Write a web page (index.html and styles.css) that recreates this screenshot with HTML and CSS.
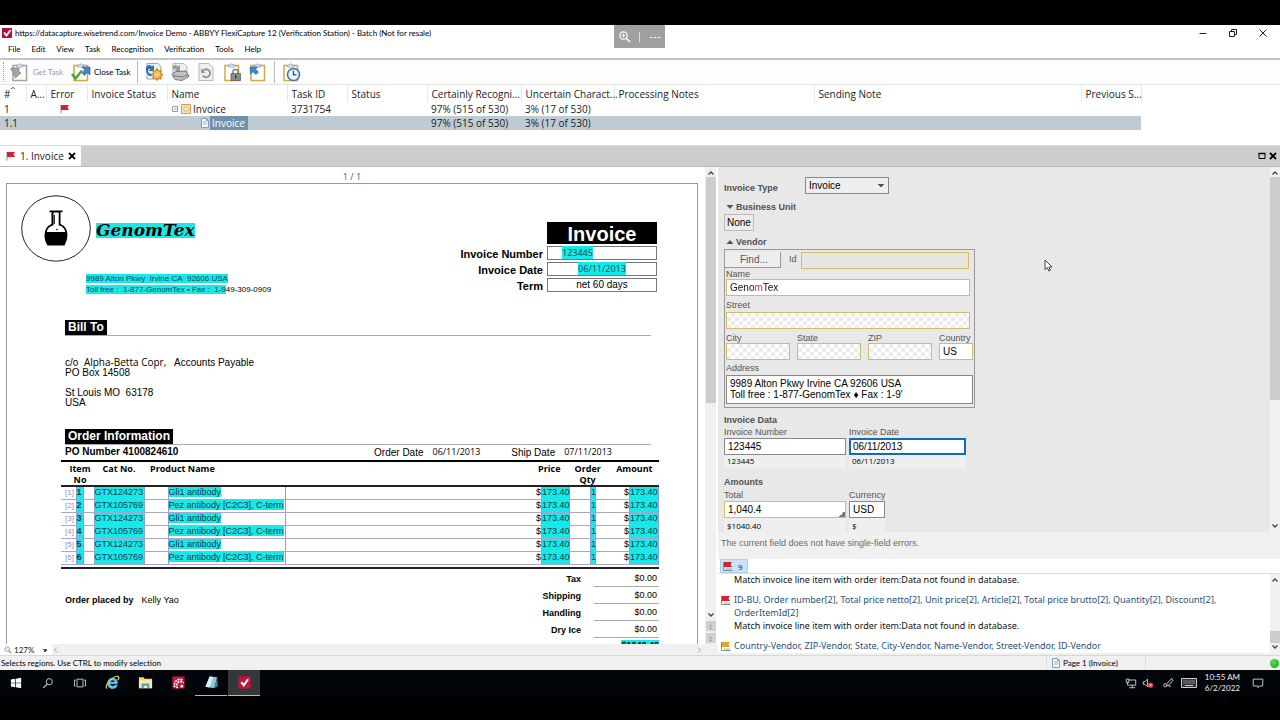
FILE: index.html
```html
<!DOCTYPE html>
<html lang="en">
<head>
<meta charset="utf-8">
<title>ABBYY FlexiCapture 12 (Verification Station)</title>
<link rel="stylesheet" href="styles.css">
</head>
<body>
<svg class="defs" aria-hidden="true">
  <symbol id="flag" viewBox="0 0 10 10"><path d="M1 1V9.5" stroke="#8a8a8a" stroke-width="1"/><path d="M1 1H9L7.5 3.5 9 6H1z" fill="currentColor"/></symbol>
  <symbol id="flagdoc" viewBox="0 0 10 10"><path d="M.5 1V9.500H9.500" stroke="#8a8a8a" fill="none"/><path d="M3 8H9" stroke="#aab"/><path d="M1 1H9L7.500 3.500 9 6H1z" fill="currentColor"/></symbol>
  <symbol id="page" viewBox="0 0 10 10"><path d="M1.500.500H6.500L8.500 2.500V9.500H1.500z" fill="#eef4fb" stroke="#8c9db0"/><path d="M3 4H7M3 6H7" stroke="#a9b9cc"/><path d="M6.500.500V2.500H8.500" fill="none" stroke="#8c9db0"/></symbol>
  <symbol id="clip" viewBox="0 0 20 20"><path d="M3 3.500H16.500V18.500H3z" fill="#fff" stroke="currentColor" stroke-width="1.500"/><path d="M6.500 5V3H8.500Q9.700 0 11 3H13V5z" fill="#dbe9f5" stroke="#8ba3b8" stroke-width=".8"/></symbol>
  <symbol id="up" viewBox="0 0 8 8"><path d="M1.500 5.500 4 3 6.500 5.500" fill="none" stroke="#444" stroke-width="1.300"/></symbol>
  <symbol id="down" viewBox="0 0 8 8"><path d="M1.500 2.500 4 5 6.500 2.500" fill="none" stroke="#444" stroke-width="1.300"/></symbol>
</svg>

<div class="app">
  <header class="titlebar">
    <svg class="i10" viewBox="0 0 10 10"><path d="M0 0H10V10H0z" fill="#b3103c"/><path d="M2 4.500 4.500 7.500 8.500 2" fill="none" stroke="#fff" stroke-width="1.800"/></svg>
    <h1>https://datacapture.wisetrend.com/Invoice Demo - ABBYY FlexiCapture 12 (Verification Station) - Batch (Not for resale)</h1>
    <div class="winbtns">
      <button aria-label="Minimize"><svg viewBox="0 0 10 10"><path d="M1.500 5.500H8.500" stroke="#222"/></svg></button>
      <button aria-label="Restore"><svg viewBox="0 0 10 10"><path d="M1.500 3.500H6.500V8.500H1.500zM3.500 3.500V1.500H8.500V6.500H6.500" fill="none" stroke="#222"/></svg></button>
      <button aria-label="Close"><svg viewBox="0 0 10 10"><path d="M1.500 1.500 8.500 8.500M8.500 1.500 1.500 8.500" stroke="#222"/></svg></button>
    </div>
  </header>
  <div class="overlay">
    <button aria-label="Zoom in"><svg viewBox="0 0 14 14"><circle cx="5.500" cy="5.500" r="3.700" fill="none" stroke="#fff" stroke-width="1.200"/><path d="M8.300 8.300 12 12" stroke="#fff" stroke-width="1.600"/><path d="M3.700 5.500H7.300M5.500 3.700V7.300" stroke="#fff"/></svg></button>
    <span class="bar"></span>
    <button aria-label="More"><svg viewBox="0 0 14 14"><path d="M2 7.500H4.500M6 7.500H8.500M10 7.500H12.500" stroke="#fff" stroke-width="1.200"/></svg></button>
  </div>
  <nav class="menu">
    <button>File</button><button>Edit</button><button>View</button><button>Task</button><button>Recognition</button><button>Verification</button><button>Tools</button><button>Help</button>
  </nav>

  <div class="toolbar">
    <span class="grip"></span>
    <button disabled class="get"><svg viewBox="0 0 20 20" color="#a3a3a3"><use href="#clip"/><path d="M1 6H9V9.500L11 11 5.500 16 3 11.500 5 10 1 8z" fill="#a5a5a5" stroke="#777" stroke-width=".6"/></svg>Get Task</button>
    <button class="close"><svg viewBox="0 0 20 20" color="#d2a93c"><use href="#clip"/><path d="M1 12 4.500 16.500 11 8.500" fill="none" stroke="#3da53a" stroke-width="2.400"/><path d="M11 5H19V13L16.500 10.500 13.500 13.500 11 11 13.700 8z" fill="#3d86c8" stroke="#215a94" stroke-width=".6"/></svg>Close Task</button>
    <span class="sep"></span>
    <button aria-label="Recognize"><svg viewBox="0 0 20 20"><path d="M3 1.500H14L17 4.500V17H3z" fill="#e8f0f8" stroke="#9ab"/><path d="M2 5Q5 1.500 8 4.500L10 3V9H4.500L6.500 7Q4 6 4 10L9 14H5Q1 10 2 5z" fill="#2e70b0"/><path d="M13 6.500V18.500M7 12.500H19M8.700 8.200 17.300 16.800M17.300 8.200 8.700 16.800" stroke="#d08a1e" stroke-width="2.200"/><circle cx="13" cy="12.500" r="4.200" fill="#f7c765" stroke="#c98218"/><circle cx="13" cy="12.500" r="1.500" fill="#fff" stroke="#c98218" stroke-width=".6"/></svg></button>
    <button aria-label="Scan" disabled><svg viewBox="0 0 20 20"><path d="M3 1.500H14L17 4.500V15H3z" fill="#eee" stroke="#bbb"/><path d="M2 5Q5 1.500 8 4.500L10 3V9H4.500L6.500 7Q4 6 4 9" fill="#999"/><path d="M2 12 6 9.500 16 9 19 14.500 12 18.500 5 17.500z" fill="#c2c2c2" stroke="#777"/><path d="M3 13.500 12 15 18 13" fill="none" stroke="#777"/></svg></button>
    <button aria-label="Refresh page" disabled><svg viewBox="0 0 20 20"><path d="M3 1.500H13L17 5.500V18.500H3z" fill="#eee" stroke="#bbb"/><path d="M6.500 9.500A4 4 0 1 1 6.800 13.500" fill="none" stroke="#949494" stroke-width="2"/><path d="M5 6.500V11H9.500z" fill="#949494"/></svg></button>
    <button aria-label="Lock task"><svg viewBox="0 0 20 20" color="#d2a93c"><use href="#clip"/><path d="M11 12V9.500Q11 7.500 13.500 7.500T16 9.500V12" fill="none" stroke="#777" stroke-width="1.400"/><path d="M9 11.500H18.500V18.500H9z" fill="#8b8b8b" stroke="#555" stroke-width=".7"/><path d="M13.700 13.500V16.500" stroke="#333" stroke-width="1.400"/></svg></button>
    <button aria-label="Return task"><svg viewBox="0 0 20 20" color="#d2a93c"><use href="#clip"/><path d="M2 5H9.500L7.500 7.200 10.500 10 8 12.500 5 9.800 2.500 12z" fill="#3d86c8" stroke="#215a94" stroke-width=".6"/></svg></button>
    <span class="sep"></span>
    <button aria-label="Postpone"><svg viewBox="0 0 20 20" color="#d2a93c"><use href="#clip"/><circle cx="12.500" cy="12.500" r="6" fill="#eef5fc" stroke="#3d75ad" stroke-width="1.600"/><path d="M12.500 8.500V12.800H15.500" fill="none" stroke="#235080" stroke-width="1.300"/></svg></button>
  </div>

  <div class="tasks">
    <table>
      <colgroup><col class="w26"><col class="w20"><col class="w41"><col class="w80"><col class="w120"><col class="w60"><col class="w80"><col class="w94"><col class="w93"><col class="w200"><col class="w267"><col class="w60"></colgroup>
      <thead><tr><th>#<svg class="sort"><use href="#up"/></svg></th><th>A...</th><th>Error</th><th>Invoice Status</th><th>Name</th><th>Task ID</th><th>Status</th><th>Certainly Recogni...</th><th>Uncertain Charact...</th><th>Processing Notes</th><th>Sending Note</th><th>Previous S...</th></tr></thead>
      <tbody>
        <tr><td>1</td><td></td><td class="mid"><svg class="i10 red"><use href="#flag"/></svg></td><td></td>
          <td><span class="node"><svg viewBox="0 0 8 8" class="i8"><path d="M1.500 1.500H6.500V6.500H1.500zM2.500 4H5.500" fill="none" stroke="#999"/></svg><svg viewBox="0 0 10 10" class="i10"><path d="M.5.500H9.500V9.500H.5z" fill="#fbe0bd" stroke="#d99a55"/><path d="M3 3H7V7H3z" fill="#fff4e2" stroke="#e5b27b"/></svg>Invoice</span></td>
          <td>3731754</td><td></td><td>97% (515 of 530)</td><td>3% (17 of 530)</td><td></td><td></td><td></td></tr>
        <tr class="sel"><td>1.1</td><td></td><td></td><td></td>
          <td><span class="node child"><svg class="i10"><use href="#page"/></svg><mark>Invoice</mark></span></td>
          <td></td><td></td><td>97% (515 of 530)</td><td>3% (17 of 530)</td><td></td><td></td><td></td></tr>
      </tbody>
    </table>
  </div>

  <div class="tabs">
    <div class="tab"><svg class="i10 red"><use href="#flag"/></svg><span>1. Invoice</span><button aria-label="Close tab"><svg viewBox="0 0 8 8"><path d="M1 1 7 7M7 1 1 7" stroke="#000" stroke-width="1.800"/></svg></button></div>
    <div class="tabctl">
      <button aria-label="Maximize panel"><svg viewBox="0 0 8 8"><path d="M1 1.500H7V6.500H1z" fill="none" stroke="#000"/><path d="M.5 1.500H7.500" stroke="#000" stroke-width="1.500"/></svg></button>
      <button aria-label="Close panel"><svg viewBox="0 0 8 8"><path d="M1 1 7 7M7 1 1 7" stroke="#000" stroke-width="1.800"/></svg></button>
    </div>
  </div>

  <main class="work">
    <section class="viewer">
      <div class="canvas">
        <p class="pageno">1 / 1</p>
        <article class="sheet">
          <div class="head">
            <div class="company">
              <div class="brand">
                <svg class="logo" viewBox="0 0 70 67"><ellipse cx="35" cy="33.500" rx="34.300" ry="32.700" fill="#fff" stroke="#222"/><path d="M28.500 15.500H41.500V17.300H39.500V29Q46.500 32 46.500 40 46.500 45 43.500 50.500H26.500Q23.500 46 23.500 40 23.500 32 30.500 29V17.300H28.500z" fill="#000"/><path d="M32.500 17.500H37.700V30.300Q43.500 32 44.300 37H25.700Q26.500 32 32.500 30.300z" fill="#fff"/><path d="M33.300 20V29" stroke="#000"/><circle cx="36" cy="34.500" r=".8"/></svg>
                <mark class="name">GenomTex</mark>
              </div>
              <p class="addr"><mark>9989 Alton Pkwy&nbsp; Irvine CA&nbsp; 92606 USA</mark><br><mark>Toll free :&nbsp; 1-877-GenomTex • Fax :&nbsp; 1-9</mark>49-309-0909</p>
            </div>
            <dl class="meta">
              <dt></dt><dd class="big">Invoice</dd>
              <dt>Invoice Number</dt><dd class="num"><mark>123445</mark></dd>
              <dt>Invoice Date</dt><dd class="dat"><mark>06/11/2013</mark></dd>
              <dt>Term</dt><dd>net 60 days</dd>
            </dl>
          </div>
          <div class="rule"><h2>Bill To</h2></div>
          <div class="to">
            <p>c/o&nbsp; <span class="ui">Alpha-Betta Copr,</span>&nbsp;&nbsp; Accounts Payable</p>
            <p>PO Box 14508</p><p>&nbsp;</p><p>St Louis MO&nbsp; 63178</p><p>USA</p>
          </div>
          <div class="rule"><h2>Order Information</h2></div>
          <div class="po"><strong>PO Number 4100824610</strong><span class="od">Order Date</span><span class="ui d1">06/11/2013</span><span class="sd">Ship Date</span><span class="ui">07/11/2013</span></div>
          <table class="items">
            <colgroup><col class="w15"><col class="w7"><col class="w11"><col class="w50"><col class="w24"><col class="w117"><col><col class="w28"><col class="w21"><col class="w5"><col class="w34"><col class="w29"></colgroup>
            <thead><tr><th colspan="3" class="c it">Item<br>No</th><th class="c">Cat No.</th><th colspan="2" class="pn">Product Name</th><th colspan="2" class="pr">Price</th><th colspan="2" class="oq"><span>Order<br>Qty</span></th><th colspan="2" class="am">Amount</th></tr></thead>
            <tbody>
              <tr><td>[1]</td><td class="h b">1</td><td></td><td class="h">GTX124273</td><td></td><td class="p"><mark>Gli1 antibody</mark></td><td class="r">$</td><td class="h">173.40</td><td></td><td class="h q">1</td><td class="r">$</td><td class="h">173.40</td></tr>
              <tr><td>[2]</td><td class="h b">2</td><td></td><td class="h">GTX105769</td><td></td><td class="p"><mark>Pez antibody [C2C3], C-term</mark></td><td class="r">$</td><td class="h">173.40</td><td></td><td class="h q">1</td><td class="r">$</td><td class="h">173.40</td></tr>
              <tr><td>[3]</td><td class="h b">3</td><td></td><td class="h">GTX124273</td><td></td><td class="p"><mark>Gli1 antibody</mark></td><td class="r">$</td><td class="h">173.40</td><td></td><td class="h q">1</td><td class="r">$</td><td class="h">173.40</td></tr>
              <tr><td>[4]</td><td class="h b">4</td><td></td><td class="h">GTX105769</td><td></td><td class="p"><mark>Pez antibody [C2C3], C-term</mark></td><td class="r">$</td><td class="h">173.40</td><td></td><td class="h q">1</td><td class="r">$</td><td class="h">173.40</td></tr>
              <tr><td>[5]</td><td class="h b">5</td><td></td><td class="h">GTX124273</td><td></td><td class="p"><mark>Gli1 antibody</mark></td><td class="r">$</td><td class="h">173.40</td><td></td><td class="h q">1</td><td class="r">$</td><td class="h">173.40</td></tr>
              <tr><td>[6]</td><td class="h b">6</td><td></td><td class="h">GTX105769</td><td></td><td class="p"><mark>Pez antibody [C2C3], C-term</mark></td><td class="r">$</td><td class="h">173.40</td><td></td><td class="h q">1</td><td class="r">$</td><td class="h">173.40</td></tr>
            </tbody>
          </table>
          <div class="foot">
            <p><strong>Order placed by</strong>Kelly Yao</p>
            <dl>
              <dt>Tax</dt><dd>$0.00</dd><dt>Shipping</dt><dd>$0.00</dd><dt>Handling</dt><dd>$0.00</dd><dt>Dry Ice</dt><dd>$0.00</dd><dt></dt><dd class="sum"><mark>$1040.40</mark></dd>
            </dl>
          </div>
        </article>
      </div>
      <div class="vscroll doc"><svg><use href="#up"/></svg><span class="thumb"></span><span class="space"></span><svg><use href="#down"/></svg><button aria-label="Previous page">↕</button><button aria-label="Next page">↕</button></div>
      <div class="hbar">
        <svg viewBox="0 0 10 10" class="i8"><circle cx="4" cy="4" r="3" fill="#d6ebfa" stroke="#7fa8c8"/><path d="M6 6 9 9" stroke="#d79a3a" stroke-width="1.800"/></svg>
        <select aria-label="Zoom"><option>127%</option></select><span class="track"><svg viewBox="0 0 8 8"><path d="M5 1.500 2.500 4 5 6.500" fill="none" stroke="#aaa"/></svg><svg viewBox="0 0 8 8"><path d="M3 1.500 5.500 4 3 6.500" fill="none" stroke="#aaa"/></svg></span>
      </div>
    </section>

    <section class="side">
      <div class="formwrap">
        <form class="form">
          <div class="type"><label for="it">Invoice Type</label><select id="it"><option>Invoice</option></select></div>
          <h3><svg viewBox="0 0 8 8"><path d="M.5 2H7.500L4 6z" fill="#555"/></svg>Business Unit</h3>
          <button type="button" class="none">None</button>
          <h3><svg viewBox="0 0 8 8"><path d="M.5 6H7.500L4 2z" fill="#555"/></svg>Vendor</h3>
          <fieldset>
            <div class="find"><button type="button">Find...</button><label for="vid">Id</label><input id="vid" class="y dim"></div>
            <label for="vn">Name</label><div class="clipbox y"><input id="vn" value="GenomTex"></div>
            <label for="vs" class="mt">Street</label><input id="vs" class="y chk">
            <div class="quad">
              <div><label for="vc">City</label><input id="vc" class="y chk"></div>
              <div><label for="vst">State</label><input id="vst" class="y chk"></div>
              <div><label for="vz">ZIP</label><input id="vz" class="y chk"></div>
              <div><label for="vco">Country</label><input id="vco" class="y" value="US"></div>
            </div>
            <label for="va" class="mt">Address</label><textarea id="va" rows="2">9989 Alton Pkwy Irvine CA 92606 USA
Toll free : 1-877-GenomTex ♦ Fax : 1-9'</textarea>
          </fieldset>
          <h3 class="sec">Invoice Data</h3>
          <div class="pair"><div><label for="n">Invoice Number</label><input id="n" value="123445"><output>123445</output></div><div><label for="d">Invoice Date</label><input id="d" class="focus" value="06/11/2013"><output>06/11/2013</output></div></div>
          <h3 class="sec">Amounts</h3>
          <div class="pair amt"><div class="corner"><label for="t">Total</label><input id="t" class="y" value="1,040.4"><output>$1040.40</output></div><div><label for="c">Currency</label><input id="c" value="USD"><output>$</output></div></div>
        </form>
        <div class="vscroll"><svg><use href="#up"/></svg><span class="thumb f"></span><span class="space"></span><svg><use href="#down"/></svg></div>
      </div>
      <p class="msg">The current field does not have single-field errors.</p>
      <div class="errtabs"><button><svg class="red"><use href="#flagdoc"/></svg>9</button></div>
      <div class="errors">
        <ul>
          <li><p>Match invoice line item with order item:Data not found in database.</p></li>
          <li><svg class="red"><use href="#flagdoc"/></svg><a href="#">ID-BU, Order number[2], Total price netto[2], Unit price[2], Article[2], Total price brutto[2], Quantity[2], Discount[2], OrderItemId[2]</a><p>Match invoice line item with order item:Data not found in database.</p></li>
          <li><svg class="gold"><use href="#flagdoc"/></svg><a href="#">Country-Vendor, ZIP-Vendor, State, City-Vendor, Name-Vendor, Street-Vendor, ID-Vendor</a></li>
        </ul>
        <div class="vscroll"><svg><use href="#up"/></svg><span class="space"></span><span class="thumb e"></span><svg><use href="#down"/></svg></div>
      </div>
    </section>
  </main>

  <footer class="status"><span>Selects regions. Use CTRL to modify selection</span><span class="pg"><svg class="i10"><use href="#page"/></svg>Page 1 (Invoice)</span><span class="led"><i></i></span></footer>

  <div class="taskbar">
    <button aria-label="Start"><svg viewBox="0 0 14 14"><path d="M1 2.800 6.200 2V6.600H1zM7 1.900 13 1V6.600H7zM1 7.400H6.200V12L1 11.200zM7 7.400H13V13L7 12.100z" fill="#fff"/></svg></button>
    <button aria-label="Search"><svg viewBox="0 0 14 14"><circle cx="8.500" cy="5.500" r="3.600" fill="none" stroke="#ddd"/><path d="M6 8.200 1.500 12.700" stroke="#ddd" stroke-width="1.200"/></svg></button>
    <button aria-label="Task view"><svg viewBox="0 0 14 14"><path d="M3.500 2.500H10.500V11.500H3.500zM2 3.500H.5V10.500H2M12 3.500H13.500V10.500H12" fill="none" stroke="#ddd"/></svg></button>
    <button aria-label="Internet Explorer"><svg viewBox="0 0 16 16"><path d="M12.500 9.300H5.200Q5.500 12 8.300 12 10 12 10.700 10.800H13.300Q12 14.500 8 14.500 3 14.300 2.800 9 3 3.500 8 3.300 13.500 3.500 13.300 9.300zM5.300 7.500H10.800Q10.500 5.300 8 5.300 5.700 5.500 5.300 7.500z" fill="#5fc8f5" stroke="#5fc8f5" stroke-width=".6"/><path d="M2 14.500Q-.5 12 5 6 11 .5 14 1.500 15.500 2.500 13.800 5.500" fill="none" stroke="#f3d04e" stroke-width="1.300"/></svg></button>
    <button aria-label="File Explorer"><svg viewBox="0 0 16 16"><path d="M1 2.500H6L7 4H15V14H1z" fill="#f3d77a"/><path d="M1 5.500H15V14H1z" fill="#fbe9a4"/><path d="M4 9H12V14H10V11.500H6V14H4z" fill="#3da0d4"/></svg></button>
    <button aria-label="Licensing"><svg viewBox="0 0 16 16"><path d="M1.500 1.500H14.500V14.500H1.500z" fill="#c2143c"/><path d="M4 13A6 6 0 0 1 12.500 5.500M7 14A3.700 3.700 0 0 1 13.500 8.500" fill="none" stroke="#fff" stroke-width="1.800" stroke-dasharray="2 1"/><circle cx="11.500" cy="12" r="1.500" fill="#fff"/></svg></button>
    <button aria-label="Notepad" class="run"><svg viewBox="0 0 16 16"><path d="M6 1.500 14 2.500 11 14 1.500 12.500z" fill="#8cc5d8"/><path d="M6 1.500 10 2 6 13.200 1.500 12.500z" fill="#d7eef5"/><path d="M14 2.500 14.800 12 11 14z" fill="#4d7f92"/></svg></button>
    <button aria-label="FlexiCapture" class="run on"><svg viewBox="0 0 16 16"><path d="M1.500 1.500H14.500V14.500H1.500z" fill="#c2143c"/><path d="M4.500 7.500 7.300 11 11.800 4.500" fill="none" stroke="#fff" stroke-width="2.200"/></svg></button>
    <div class="tray">
      <svg viewBox="0 0 14 14"><path d="M4.500 3.500H12.500V9.500H4.500M8.500 9.500V12M5 12.500H12M1.500 2.500H4.500V6.500H1.500zM3 6.500V9.500H4.500" fill="none" stroke="#ddd"/></svg>
      <svg viewBox="0 0 14 14"><path d="M1.500 5.500H3.500L6.500 2.500V11.500L3.500 8.500H1.500z" fill="none" stroke="#ddd"/><circle cx="10" cy="9.500" r="3.200" fill="#d8343f"/><path d="M8.800 8.300 11.200 10.700M11.200 8.300 8.800 10.700" stroke="#fff"/></svg>
      <svg viewBox="0 0 14 14"><path d="M11.500 1.500 6 7.500 5 10.500 8 9.500 12.500 4.500zM5 7.500Q1.500 7.500 2 10.500 3 13 5.500 10.500M8 9.500Q8 12.500 10.500 10.500" fill="none" stroke="#ddd"/></svg>
      <svg class="kb" viewBox="0 0 16 12"><path d="M.5 1.500H15.500V10.500H.5z" fill="#333" stroke="#ccc"/><path d="M2.500 4H13.500M2.500 6H13.500" stroke="#ccc" stroke-dasharray="1 1"/><path d="M4 8.500H12" stroke="#ccc"/></svg>
      <time>10:55 AM<br>6/2/2022</time>
      <svg viewBox="0 0 14 14"><path d="M1.500 2.500H12.500V10.500H9L7 12.500V10.500H1.500z" fill="none" stroke="#ddd"/></svg>
    </div>
  </div>
  <svg class="cursor" viewBox="0 0 9 13"><path d="M1 1V10.500L3.300 8.500 4.800 12 6.300 11.300 4.900 8H8z" fill="#fff" stroke="#333" stroke-width=".9"/></svg>
</div>
</body>
</html>
```

FILE: styles.css
```css
* { box-sizing: border-box; margin: 0; padding: 0; }
:root { --ui: "Open Sans", "Noto Sans", sans-serif; --small: Lato, "Open Sans", sans-serif; --doc: "Liberation Sans", Arial, sans-serif; }
body { background: #000; font-family: var(--ui); font-size: 9px; color: #222; }
button, input, select, textarea { font: inherit; color: inherit; border: 0; background: none; border-radius: 0; outline: 0; }
button { display: flex; align-items: center; }
svg { flex: none; display: block; overflow: visible; }
mark { background: #18e8e8; color: inherit; }
table { border-collapse: collapse; table-layout: fixed; }
th { font-weight: 400; text-align: left; }
a { text-decoration: none; color: #2b4f78; }
ul { list-style: none; }
.defs { position: absolute; width: 0; height: 0; }
.i8 { width: 8px; height: 8px; }
.i10 { width: 10px; height: 10px; }
.red { color: #d3242c; }
.gold { color: #d9ad1f; }
.ui { font-family: var(--ui); }

.app { position: relative; display: flex; flex-direction: column; height: 100vh; min-height: 600px; padding: 25px 0 24px; overflow: hidden; }
.app > * { flex: none; }
.titlebar, .menu, .toolbar, .status, .taskbar { font-family: var(--small); font-size: 8px; color: #000; }
.titlebar { display: flex; align-items: center; gap: 3px; height: 16px; padding-left: 2px; background: #fff; }
.titlebar h1 { flex: 1; font-size: 8px; font-weight: 400; white-space: nowrap; }
.winbtns { display: flex; gap: 20px; padding-right: 12px; }
.winbtns svg { width: 10px; height: 10px; }
.overlay { position: absolute; top: 25px; left: 48%; display: flex; align-items: center; justify-content: space-around; width: 51px; height: 23px; background: #a0a0a0; }
.overlay svg { width: 14px; height: 14px; }
.bar { width: 1px; height: 10px; background: #ddd; }
.menu { display: flex; gap: 11px; height: 19px; padding: 0 8px 2px; background: #fff; border-bottom: 2px solid #c4c4c4; }
.toolbar { display: flex; align-items: center; gap: 6px; height: 25px; padding-left: 3px; background: #fdfdfd; border-bottom: 1px solid #e2e2e2; }
.toolbar svg { width: 20px; height: 20px; }
.toolbar button { gap: 3px; }
.toolbar .get { color: #999; margin-right: 2px; }
.grip { height: 20px; border-left: 1px dotted #999; }
.sep { height: 22px; border-left: 1px solid #bbb; }

.tasks { height: 61px; background: #fff; border-bottom: 1px solid #ddd; font-size: 10px; line-height: 14px; }
.tasks table { width: 1141px; }
.tasks th { height: 17px; border-right: 1px solid #e8e8e8; padding-left: 4px; white-space: nowrap; color: #222; position: relative; }
.tasks td { height: 14px; padding-left: 4px; white-space: nowrap; }
.sort { position: absolute; left: 9px; top: 0; width: 8px; height: 6px; }
.tasks .mid svg { margin-left: 10px; }
.node { display: flex; align-items: center; gap: 2px; height: 14px; }
.node.child { padding-left: 29px; gap: 0; }
.node mark { background: #7192ac; color: #fff; padding: 0 3px 0 2px; }
.sel { background: #becbd3; }
.w5 { width: 5px; } .w7 { width: 7px; } .w11 { width: 11px; } .w15 { width: 15px; } .w20 { width: 20px; } .w21 { width: 21px; } .w24 { width: 24px; } .w26 { width: 26px; } .w28 { width: 28px; } .w29 { width: 29px; } .w34 { width: 34px; } .w41 { width: 41px; } .w50 { width: 50px; } .w60 { width: 60px; } .w80 { width: 80px; } .w93 { width: 93px; } .w94 { width: 94px; } .w117 { width: 117px; } .w120 { width: 120px; } .w200 { width: 200px; } .w267 { width: 267px; }

.tabs { display: flex; justify-content: space-between; height: 21px; background: #cdcdcd; border-bottom: 1px solid #bdbdbd; }
.tab { display: flex; align-items: center; gap: 4px; padding: 0 5px 0 6px; background: #fff; font-size: 10px; }
.tabs button svg { width: 8px; height: 8px; }
.tabctl { display: flex; gap: 3px; padding-right: 3px; }

.app > .work { flex: 1; min-height: 0; display: flex; background: #f0f0f0; }
.viewer { flex: 718 1 0; min-width: 0; display: grid; grid-template: minmax(0, 1fr) 11px / minmax(0, 1fr) 13px; background: #fff; }
.canvas { overflow: hidden; padding: 4px 7px 0 6px; }
.pageno { text-align: center; line-height: 12px; height: 12px; color: #555; font-size: 9px; }
.sheet { border: 1px solid #999; border-bottom: 0; padding: 11px 38px 0 54px; font-family: var(--doc); font-size: 10px; line-height: 10px; color: #000; }
.head { display: flex; justify-content: space-between; margin-left: -40px; height: 125px; }
.brand { display: flex; align-items: center; gap: 5px; }
.logo { width: 70px; height: 67px; }
.name { font: italic 900 17px/15px "DejaVu Serif", serif; margin-top: 3px; }
.addr { margin: 11px 0 0 65px; font-size: 8px; line-height: 11px; white-space: nowrap; }
.addr mark, .meta mark { color: #0b4a55; }
.meta { display: grid; grid-template-columns: auto 110px; column-gap: 4px; margin: 27px 2px 0 0; align-content: start; text-align: center; }
.meta dt { font-weight: 700; font-size: 11px; line-height: 16px; text-align: right; }
.meta dd { border: 1px solid #777; line-height: 12px; height: 14px; }
.meta .big { height: 22px; margin-bottom: 2px; border: 0; background: #000; color: #fff; font: 700 20px/25px var(--doc); }
.meta .num { text-align: left; padding-left: 14px; font-size: 9px; font-family: var(--ui); }
.meta .dat { font-size: 9px; font-family: var(--ui); }
.rule { display: flex; margin: 0 8px 0 4px; border-bottom: 1px solid #aaa; }
.rule h2 { background: #000; color: #fff; font-size: 12px; line-height: 15px; padding: 0 3px; }
.to { margin: 21px 4px 12px; height: 60px; white-space: nowrap; }
.po { display: flex; height: 15px; margin-left: 4px; line-height: 14px; white-space: nowrap; }
.po strong { flex: 1; }
.po .ui { font-size: 9px; }
.od, .sd { margin-right: 9px; padding-top: 1px; }
.d1 { margin-right: 31px; }
.po span:last-child { margin-right: 47px; }
.items { width: 100%; border-top: 2px solid #000; font-size: 9px; }
.items th { height: 24px; font: 700 9px/11px var(--ui); vertical-align: top; white-space: nowrap; padding-top: 1px; }
.items .c { text-align: center; }
.items .it { padding-left: 5px; }
.items .pn { padding-left: 6px; }
.items .pr { text-align: right; padding-right: 9px; }
.items .oq { padding-left: 5px; }
.items .oq span { display: inline-block; text-align: center; }
.items .am { text-align: right; padding-right: 6px; }
.items tbody { border-top: 2px solid #222; }
.items td { height: 13px; line-height: 11px; border-bottom: 1px solid #a9a5cc; white-space: nowrap; color: #0b3d4a; }
.items td:first-child { color: #8f8fc8; font-size: 8px; padding-left: 4px; }
.items .h { background: #18e8e8; border-left: 1px solid #7fa5d8; border-right: 1px solid #7fa5d8; }
.items .b { font-weight: 700; }
.items .p { border-left: 1px solid #7fa5d8; border-right: 1px solid #7fa5d8; }
.items .r { text-align: right; color: #000; }
.foot { display: flex; justify-content: space-between; margin-top: 2px; padding-top: 1px; border-top: 2px solid #222; font-size: 9px; }
.foot p { padding: 25px 0 0 4px; }
.foot strong { margin-right: 8px; }
.foot dl { display: grid; grid-template-columns: auto 65px; column-gap: 13px; text-align: right; }
.foot dt { font-weight: 700; line-height: 19px; height: 17px; }
.foot dd { line-height: 16px; height: 17px; border-bottom: 1px solid #aaa; padding-right: 2px; }
.foot .sum { padding: 2px 0 0; border: 0; line-height: 10px; font-weight: 700; }

.vscroll { display: flex; flex-direction: column; align-items: center; width: 10px; padding: 2px 0; background: #f0f0f0; }
.vscroll svg { width: 8px; height: 8px; }
.vscroll .thumb { width: 10px; background: #cdcdcd; flex: 226 1 0; }
.vscroll .space { flex: 208 1 0; }
.vscroll.doc { width: 11px; padding-bottom: 1px; }
.vscroll.doc button { width: 10px; height: 10px; margin-top: 2px; background: #d0d0d0; color: #555; font-size: 7px; justify-content: center; }
.vscroll .f { flex: 222 1 0; }
.vscroll .f + .space { flex: 122 1 0; }
.vscroll .e { flex: 12 1 0; }
.errors .vscroll .space { flex: 48 1 0; }
.hbar { grid-column: 1 / -1; display: flex; align-items: center; padding-left: 4px; background: #fff; font-family: var(--small); }
.hbar select, .type select { appearance: none; background-image: linear-gradient(to bottom right, #555 50%, transparent 50%), linear-gradient(to bottom left, #555 50%, transparent 50%); background-repeat: no-repeat; }
.hbar select { width: 40px; padding-left: 2px; font-size: 8px; background-size: 3px 3px; background-position: 33px 4px, 30px 4px; }
.track { flex: 1; display: flex; align-items: center; justify-content: space-between; height: 11px; padding: 0 15px 0 0; background: #f0f0f0; }
.track svg { width: 8px; height: 8px; }

.side { flex: 562 1 0; min-width: 0; display: flex; flex-direction: column; }
.formwrap { display: flex; flex: none; background: #e8e8e8; font-family: var(--doc); }
.form { flex: 1; padding: 10px 0 0 6px; font-size: 10px; color: #000; }
.form label { display: block; font-size: 9px; line-height: 9px; color: #555; }
.form h3, .form .type label { display: flex; align-items: center; gap: 2px; font-size: 9px; line-height: 10px; font-weight: 700; color: #505050; }
.form h3 svg { width: 8px; height: 8px; margin-left: 2px; }
.type { display: flex; align-items: center; margin-bottom: 8px; }
.form .type label { width: 81px; padding-top: 5px; }
.type select { width: 84px; height: 17px; padding-left: 3px; border: 1px solid #888; background-color: #efefef; background-size: 4px 4px; background-position: 75px 6px, 71px 6px; }
.none { height: 17px; padding: 0 2px; margin: 2px 0 6px; border: 1px solid #bbb; background: #ececec; }
.form fieldset { width: 251px; min-width: 0; margin-top: 2px; padding: 0 1px 3px; border: 1px solid #999; }
.form input { display: block; width: 100%; height: 17px; padding: 0 3px; border: 1px solid #888; background: #fff; }
.form .y { border: 1px solid #d3bd68; }
.form .dim { background: #e6e6e3; width: 168px; }
.form .chk { background: repeating-conic-gradient(#ececec 0 25%, #fff 0 50%) 0 0 / 8px 8px; }
.find { display: flex; align-items: center; margin: 0 0 1px -1px; }
.find button { width: 56px; height: 16px; padding-left: 15px; border: 1px solid #999; border-width: 0 1px 1px 0; background: #eee; color: #555; }
.form .find label { width: 12px; margin-left: 8px; }
.form .find input { margin-top: 2px; }
.clipbox { width: 244px; background: #fff; }
.form .clipbox input { height: 15px; border: 0; color: transparent; background: linear-gradient(90deg, #111 27px, #d8283c 27px 36px, #111 36px); -webkit-background-clip: text; background-clip: text; }
.form .clipbox + .mt { margin-top: 5px; margin-bottom: 2px; }
#vs { width: 244px; }
.quad { display: grid; grid-template-columns: 64px 64px 64px 34px; gap: 7px; margin-top: 5px; white-space: nowrap; }
.form .quad + .mt { margin: 4px 0 2px; }
.form textarea { display: block; width: 247px; height: 29px; padding: 2px 3px; border: 1px solid #888; background: #fff; line-height: 11px; resize: none; overflow: hidden; }
.form .sec { margin: 7px 0 3px; }
.pair { display: grid; grid-template-columns: 122px 117px; gap: 3px; }
.pair label { margin-bottom: 1px; }
.form .focus { border: 2px solid #0f6cbd; padding-left: 2px; }
.pair output { display: block; height: 13px; padding-left: 3px; background: #efefef; font: 8px/12px var(--ui); }
.form .pair + .sec { margin: 9px 0 4px; }
.amt { grid-template-columns: 122px 36px; }
.amt output { height: 14px; padding-top: 2px; }
.corner { position: relative; }
.corner::after { content: ""; position: absolute; right: 1px; bottom: 15px; width: 6px; height: 6px; background: linear-gradient(135deg, transparent 50%, #777 50%); }
.msg { padding: 5px 3px 0; height: 27px; flex: none; font-family: var(--doc); font-size: 9px; color: #6b6b6b; line-height: 12px; }
.errtabs { height: 15px; background: #fff; border-bottom: 1px solid #ddd; padding-left: 2px; flex: none; }
.errtabs button { gap: 5px; height: 14px; padding: 0 4px 0 2px; background: #c9e3f7; border: 1px solid #a8cfec; font-size: 8px; }
.errtabs svg { width: 10px; height: 10px; }
.errors { flex: 1; min-height: 0; display: flex; background: #fff; font-family: "Noto Sans", sans-serif; font-size: 9px; line-height: 13px; overflow: hidden; margin-bottom: 2px; }
.errors ul { flex: 1; margin-top: -1px; }
.errors li { position: relative; padding: 0 20px 0 16px; margin-bottom: 7px; color: #111; }
.errors li svg { position: absolute; left: 3px; top: 2px; width: 10px; height: 10px; }

.status { display: flex; align-items: center; height: 15px; padding-left: 1px; background: #f0f0f0; border-top: 1px solid #d8d8d8; }
.status > span:first-child { flex: 1; }
.pg { display: flex; align-items: center; gap: 2px; width: 100px; height: 14px; padding-left: 4px; border: solid #ddd; border-width: 0 1px; }
.led { display: flex; justify-content: flex-end; width: 134px; padding-right: 1px; }
.led i { width: 9px; height: 9px; border-radius: 50%; background: radial-gradient(circle at 40% 35%, #5be14f, #0e9a12); }
.taskbar { display: flex; height: 26px; background: #02060b; }
.taskbar button { width: 33px; justify-content: center; border-bottom: 1px solid transparent; }
.taskbar button svg { width: 15px; height: 15px; }
.taskbar button:nth-child(-n+3) { width: 32px; }
.taskbar button:nth-child(-n+3) svg { width: 12px; height: 12px; }
.taskbar .run { width: 32px; border-bottom: 1px solid #a9c0cc; }
.taskbar .on { background: #35383b; margin-left: 1px; }
.tray { display: flex; align-items: center; gap: 7px; margin-left: auto; padding-right: 16px; color: #eee; }
.tray svg { width: 12px; height: 12px; }
.tray svg:first-child { margin-right: -2px; }
.tray svg:first-child + svg { margin-right: 1px; }
.tray .kb { width: 16px; }
.tray time { line-height: 11px; text-align: center; margin: 0 5px 0 1px; }
.cursor { position: absolute; left: 1044px; top: 259px; width: 9px; height: 13px; }
```
